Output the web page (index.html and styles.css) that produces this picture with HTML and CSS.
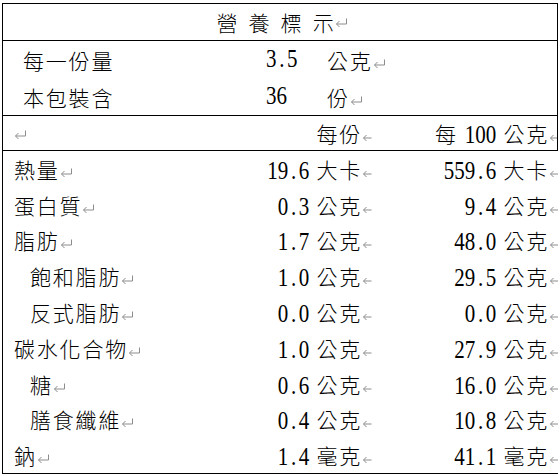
FILE: index.html
```html
<!DOCTYPE html>
<html lang="zh-Hant">
<head>
<meta charset="utf-8">
<title>營養標示</title>
<link rel="stylesheet" href="styles.css">
</head>
<body>
<div class="sheet">
  <div class="title">營 養 標 示<svg class="pm" viewBox="0 0 12 9"><path d="M11.5 0.5V6H1.5M4.5 3L1.5 6L4.5 9"/></svg></div>
  <div class="serving">
    <div class="srow"><span class="slbl">每一份量</span><span><span class="n">3<span class="pt">.</span>5</span></span><span class="sunit">公克<svg class="pm" viewBox="0 0 12 9"><path d="M11.5 0.5V6H1.5M4.5 3L1.5 6L4.5 9"/></svg></span></div>
    <div class="srow"><span class="slbl">本包裝含</span><span><span class="n">36</span></span><span class="sunit">份<svg class="pm" viewBox="0 0 12 9"><path d="M11.5 0.5V6H1.5M4.5 3L1.5 6L4.5 9"/></svg></span></div>
  </div>
  <div class="head">
    <div class="grid">
      <span class="lbl"><svg class="pm" viewBox="0 0 12 9"><path d="M11.5 0.5V6H1.5M4.5 3L1.5 6L4.5 9"/></svg></span>
      <span class="val">每份<svg class="cm" viewBox="0 0 10 9"><path d="M9.5 6H1.5M4.5 3L1.5 6L4.5 9"/></svg></span>
      <span class="val">每 <span class="n">100</span> 公克<svg class="cm" viewBox="0 0 10 9"><path d="M9.5 6H1.5M4.5 3L1.5 6L4.5 9"/></svg></span>
    </div>
  </div>
  <div class="data">
    <div class="grid">
      <span class="lbl">熱量<svg class="pm" viewBox="0 0 12 9"><path d="M11.5 0.5V6H1.5M4.5 3L1.5 6L4.5 9"/></svg></span>
      <span class="val"><span class="n">19<span class="pt">.</span>6</span> 大卡<svg class="cm" viewBox="0 0 10 9"><path d="M9.5 6H1.5M4.5 3L1.5 6L4.5 9"/></svg></span>
      <span class="val"><span class="n">559<span class="pt">.</span>6</span> 大卡<svg class="cm" viewBox="0 0 10 9"><path d="M9.5 6H1.5M4.5 3L1.5 6L4.5 9"/></svg></span>
    </div>
    <div class="grid">
      <span class="lbl">蛋白質<svg class="pm" viewBox="0 0 12 9"><path d="M11.5 0.5V6H1.5M4.5 3L1.5 6L4.5 9"/></svg></span>
      <span class="val"><span class="n">0<span class="pt">.</span>3</span> 公克<svg class="cm" viewBox="0 0 10 9"><path d="M9.5 6H1.5M4.5 3L1.5 6L4.5 9"/></svg></span>
      <span class="val"><span class="n">9<span class="pt">.</span>4</span> 公克<svg class="cm" viewBox="0 0 10 9"><path d="M9.5 6H1.5M4.5 3L1.5 6L4.5 9"/></svg></span>
    </div>
    <div class="grid">
      <span class="lbl">脂肪<svg class="pm" viewBox="0 0 12 9"><path d="M11.5 0.5V6H1.5M4.5 3L1.5 6L4.5 9"/></svg></span>
      <span class="val"><span class="n">1<span class="pt">.</span>7</span> 公克<svg class="cm" viewBox="0 0 10 9"><path d="M9.5 6H1.5M4.5 3L1.5 6L4.5 9"/></svg></span>
      <span class="val"><span class="n">48<span class="pt">.</span>0</span> 公克<svg class="cm" viewBox="0 0 10 9"><path d="M9.5 6H1.5M4.5 3L1.5 6L4.5 9"/></svg></span>
    </div>
    <div class="grid">
      <span class="lbl sub">飽和脂肪<svg class="pm" viewBox="0 0 12 9"><path d="M11.5 0.5V6H1.5M4.5 3L1.5 6L4.5 9"/></svg></span>
      <span class="val"><span class="n">1<span class="pt">.</span>0</span> 公克<svg class="cm" viewBox="0 0 10 9"><path d="M9.5 6H1.5M4.5 3L1.5 6L4.5 9"/></svg></span>
      <span class="val"><span class="n">29<span class="pt">.</span>5</span> 公克<svg class="cm" viewBox="0 0 10 9"><path d="M9.5 6H1.5M4.5 3L1.5 6L4.5 9"/></svg></span>
    </div>
    <div class="grid">
      <span class="lbl sub">反式脂肪<svg class="pm" viewBox="0 0 12 9"><path d="M11.5 0.5V6H1.5M4.5 3L1.5 6L4.5 9"/></svg></span>
      <span class="val"><span class="n">0<span class="pt">.</span>0</span> 公克<svg class="cm" viewBox="0 0 10 9"><path d="M9.5 6H1.5M4.5 3L1.5 6L4.5 9"/></svg></span>
      <span class="val"><span class="n">0<span class="pt">.</span>0</span> 公克<svg class="cm" viewBox="0 0 10 9"><path d="M9.5 6H1.5M4.5 3L1.5 6L4.5 9"/></svg></span>
    </div>
    <div class="grid">
      <span class="lbl">碳水化合物<svg class="pm" viewBox="0 0 12 9"><path d="M11.5 0.5V6H1.5M4.5 3L1.5 6L4.5 9"/></svg></span>
      <span class="val"><span class="n">1<span class="pt">.</span>0</span> 公克<svg class="cm" viewBox="0 0 10 9"><path d="M9.5 6H1.5M4.5 3L1.5 6L4.5 9"/></svg></span>
      <span class="val"><span class="n">27<span class="pt">.</span>9</span> 公克<svg class="cm" viewBox="0 0 10 9"><path d="M9.5 6H1.5M4.5 3L1.5 6L4.5 9"/></svg></span>
    </div>
    <div class="grid">
      <span class="lbl sub">糖<svg class="pm" viewBox="0 0 12 9"><path d="M11.5 0.5V6H1.5M4.5 3L1.5 6L4.5 9"/></svg></span>
      <span class="val"><span class="n">0<span class="pt">.</span>6</span> 公克<svg class="cm" viewBox="0 0 10 9"><path d="M9.5 6H1.5M4.5 3L1.5 6L4.5 9"/></svg></span>
      <span class="val"><span class="n">16<span class="pt">.</span>0</span> 公克<svg class="cm" viewBox="0 0 10 9"><path d="M9.5 6H1.5M4.5 3L1.5 6L4.5 9"/></svg></span>
    </div>
    <div class="grid">
      <span class="lbl sub">膳食纖維<svg class="pm" viewBox="0 0 12 9"><path d="M11.5 0.5V6H1.5M4.5 3L1.5 6L4.5 9"/></svg></span>
      <span class="val"><span class="n">0<span class="pt">.</span>4</span> 公克<svg class="cm" viewBox="0 0 10 9"><path d="M9.5 6H1.5M4.5 3L1.5 6L4.5 9"/></svg></span>
      <span class="val"><span class="n">10<span class="pt">.</span>8</span> 公克<svg class="cm" viewBox="0 0 10 9"><path d="M9.5 6H1.5M4.5 3L1.5 6L4.5 9"/></svg></span>
    </div>
    <div class="grid">
      <span class="lbl">鈉<svg class="pm" viewBox="0 0 12 9"><path d="M11.5 0.5V6H1.5M4.5 3L1.5 6L4.5 9"/></svg></span>
      <span class="val"><span class="n">1<span class="pt">.</span>4</span> 毫克<svg class="cm" viewBox="0 0 10 9"><path d="M9.5 6H1.5M4.5 3L1.5 6L4.5 9"/></svg></span>
      <span class="val"><span class="n">41<span class="pt">.</span>1</span> 毫克<svg class="cm" viewBox="0 0 10 9"><path d="M9.5 6H1.5M4.5 3L1.5 6L4.5 9"/></svg></span>
    </div>
  </div>
</div>
</body>
</html>
```
FILE: styles.css
```css
html, body {
  margin: 0;
  padding: 0;
  background: #fff;
}
body {
  font-family: "Liberation Serif", "Noto Sans CJK TC", serif;
  font-size: 21px;
  font-weight: 300;
  color: #000;
  letter-spacing: 1.8px;
}
.sheet {
  margin: 3px 0 0 2px;
  width: 556px;
  box-sizing: border-box;
  border-top: 1px solid #000;
  border-left: 1px solid #000;
  border-bottom: 1px solid #000;
  overflow: hidden;
}
.title {
  height: 36px;
  display: flex;
  align-items: center;
  justify-content: center;
  padding-left: 4px;
  border-right: 1px solid #000;
  border-bottom: 1px solid #000;
  word-spacing: 2.2px;
  white-space: pre;
}
.serving {
  border-right: 1px solid #000;
  border-bottom: 1px solid #000;
}
.srow {
  height: 37px;
  display: grid;
  grid-template-columns: 263px 61px 1fr;
  align-items: center;
}
.slbl {
  padding-left: 20px;
}
.n {
  display: inline-block;
  letter-spacing: 0;
  transform: scaleY(1.2);
}
.pt {
  display: inline-block;
  width: 10.5px;
  text-align: center;
}
.head {
  height: 34px;
  overflow: hidden;
  border-right: 1px solid #000;
  border-bottom: 1px solid #000;
}
.grid {
  width: 556px;
  display: grid;
  grid-template-columns: 229px 140px 187px;
  align-items: center;
  height: 100%;
}
.data .grid {
  height: 35.8px;
}
.lbl {
  padding-left: 11px;
  white-space: nowrap;
}
.lbl.sub {
  padding-left: 27px;
}
.val {
  text-align: right;
  white-space: nowrap;
}
.pm {
  display: inline-block;
  width: 12px;
  height: 9px;
  vertical-align: 1px;
  fill: none;
  stroke: #8c8c8c;
  stroke-width: 1;
}
.cm {
  display: inline-block;
  width: 10px;
  height: 9px;
  vertical-align: 1px;
  fill: none;
  stroke: #8c8c8c;
  stroke-width: 1;
}
```
